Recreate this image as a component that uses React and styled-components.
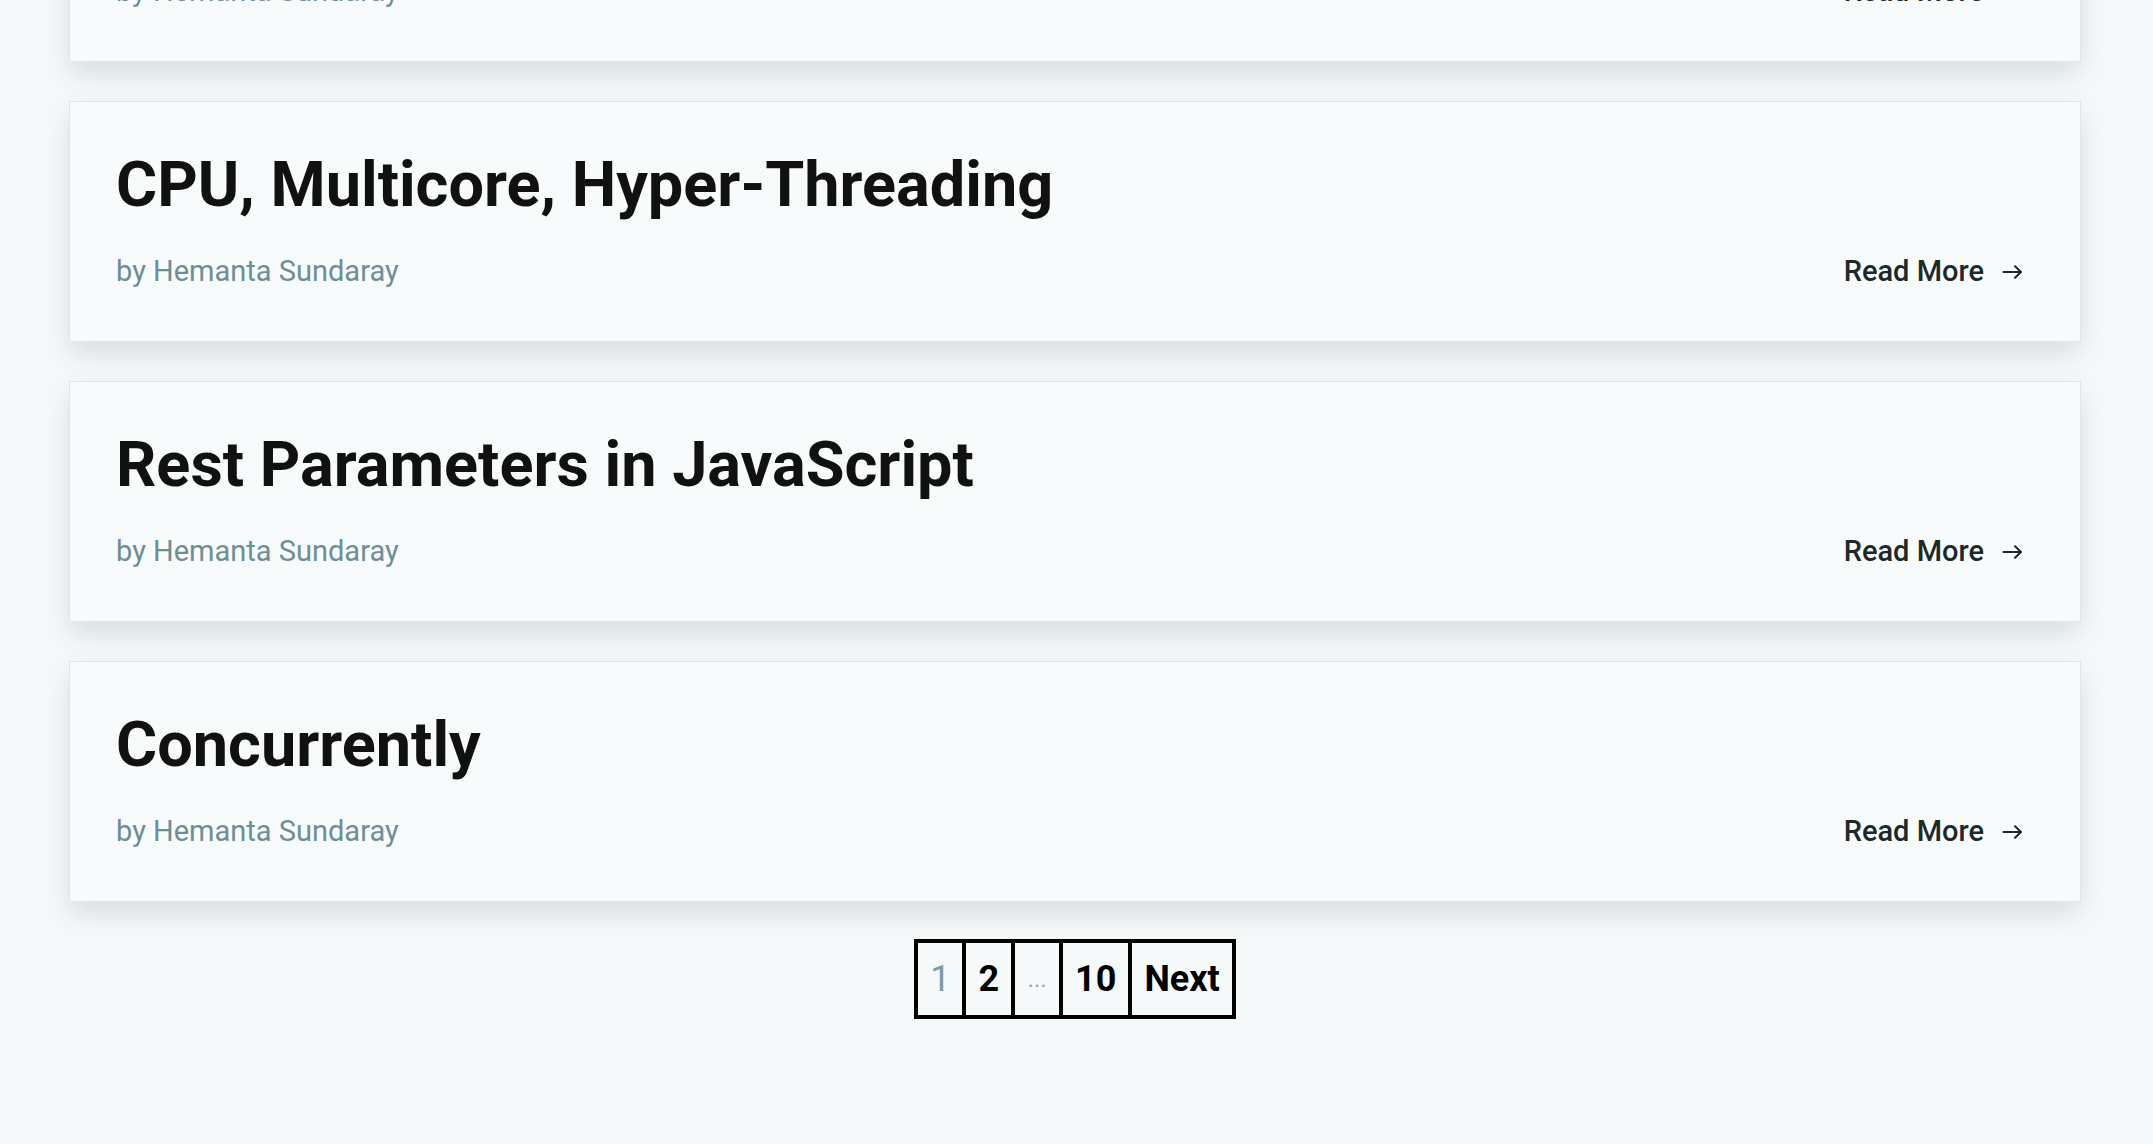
import styled, { createGlobalStyle } from 'styled-components';

const GlobalStyle = createGlobalStyle`
  html, body {
    margin: 0;
    padding: 0;
    background: #f6f9f9;
    font-family: Roboto, "Liberation Sans", sans-serif;
    overflow: hidden;
  }
`;

const Page = styled.main`
  height: 1144px;
  padding: 0 72px 0 69px;
  box-sizing: border-box;
  overflow: hidden;
`;

const PostList = styled.ul`
  list-style: none;
  margin: -179px 0 0;
  padding: 0;
  display: flex;
  flex-direction: column;
  gap: 39px;
`;

const Card = styled.li`
  height: 241px;
  box-sizing: border-box;
  background: #f8fbfb;
  border: 1px solid #dfe6e6;
  box-shadow: 0 12px 26px rgba(40, 75, 75, 0.15);
  padding: 46px 57px 0 46px;
  display: flex;
  flex-direction: column;
`;

const Title = styled.h2`
  margin: 0;
  font-size: 63px;
  line-height: 74px;
  font-weight: 700;
  color: #111;
`;

const Meta = styled.div`
  margin-top: 32px;
  display: flex;
  justify-content: space-between;
  align-items: center;
  line-height: 34px;
`;

const Author = styled.span`
  font-size: 29px;
  color: #6e8e96;
`;

const ReadMore = styled.a`
  display: flex;
  align-items: center;
  gap: 18px;
  font-size: 29px;
  font-weight: 500;
  color: #1d2929;
  text-decoration: none;
  svg {
    width: 21px;
    height: 14px;
    margin-top: 2px;
  }
`;

const Pager = styled.ul`
  list-style: none;
  margin: 37px auto 0;
  padding: 0;
  display: flex;
  width: max-content;
  border: 2px solid #000;
`;

const PageItem = styled.li`
  border: 2px solid #000;
  padding: 16px 12px;
  font-size: 36px;
  line-height: 40px;
  font-weight: ${(p) => (p.$muted ? 400 : 700)};
  color: ${(p) => (p.$muted ? '#7b9ba6' : '#000')};
  min-width: 20px;
  text-align: center;
`;

const Dots = styled(PageItem)`
  font-size: 24px;
  color: #8aaabb;
  width: 20px;
`;

const posts = [
  'The Event Loop',
  'CPU, Multicore, Hyper-Threading',
  'Rest Parameters in JavaScript',
  'Concurrently',
];

function Arrow() {
  return (
    <svg viewBox="0 0 20 14" fill="none" stroke="currentColor" strokeWidth="2" strokeLinecap="round" strokeLinejoin="round">
      <path d="M1 7h17.5" />
      <path d="M12.5 1.2 18.5 7l-6 5.8" />
    </svg>
  );
}

export default function App() {
  return (
    <>
      <GlobalStyle />
      <Page>
        <PostList>
          {posts.map((title) => (
            <Card key={title}>
              <Title>{title}</Title>
              <Meta>
                <Author>by Hemanta Sundaray</Author>
                <ReadMore href="#">
                  Read More
                  <Arrow />
                </ReadMore>
              </Meta>
            </Card>
          ))}
        </PostList>
        <Pager>
          <PageItem $muted>1</PageItem>
          <PageItem>2</PageItem>
          <Dots $muted>...</Dots>
          <PageItem>10</PageItem>
          <PageItem>Next</PageItem>
        </Pager>
      </Page>
    </>
  );
}
